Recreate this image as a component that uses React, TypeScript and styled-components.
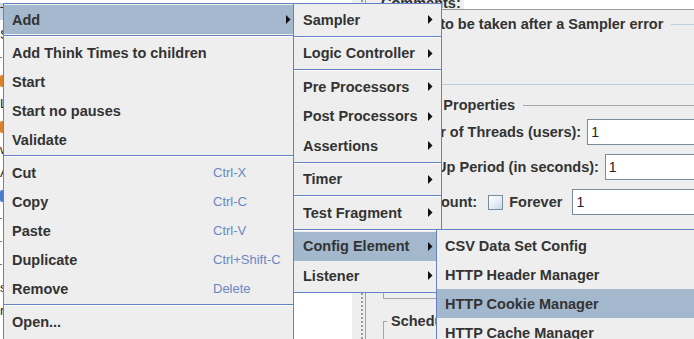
import { FC } from "react"
import styled, { createGlobalStyle } from "styled-components"

const GlobalStyle = createGlobalStyle`
  html, body {
    margin: 0;
    padding: 0;
    overflow: hidden;
    background: #eeeeee;
  }
  body {
    font-family: "Liberation Sans", Arial, sans-serif;
  }
`

const Screen = styled.div`
  position: relative;
  display: flex;
  width: 694px;
  height: 339px;
  overflow: hidden;
  background: #eeeeee;
  color: #333333;
  font-family: "Liberation Sans", Arial, sans-serif;
`

/* ---------- tree on the left (mostly hidden by the popup) ---------- */

const Tree = styled.div`
  flex: none;
  width: 352px;
  background: #ffffff;
  display: flex;
  flex-direction: column;
`
const TreeRow = styled.div<{ $indent: number }>`
  height: 23px;
  flex: none;
  display: flex;
  align-items: center;
  gap: 4px;
  padding-left: ${({ $indent }) => $indent}px;
  font-size: 13px;
  color: #222222;
  white-space: nowrap;
`
const Connector = styled.span`
  width: 10px;
  border-top: 1px dotted #777777;
`
const TreeIcon = styled.span<{ $color: string }>`
  width: 12px;
  height: 12px;
  background: ${({ $color }) => $color};
  border-radius: 2px;
`
const TreeLabel = styled.span<{ $selected?: boolean }>`
  padding: 1px 3px 1px 0;
  background: ${({ $selected }) => ($selected ? "#c8d7ea" : "transparent")};
`

/* ---------- split pane divider ---------- */

const Divider = styled.div`
  flex: none;
  width: 14px;
  padding-left: 9px;
  box-sizing: border-box;
  display: flex;
  border-right: 1px solid #8ea3c8;
  &::before {
    content: "";
    width: 0;
    border-left: 2px dotted #9b9b9b;
  }
`

/* ---------- thread group panel ---------- */

const Panel = styled.div`
  flex: none;
  width: 420px;
  display: flex;
  flex-direction: column;
  padding-left: 15px;
  box-sizing: border-box;
`
const CommentsRow = styled.div`
  height: 9px;
  flex: none;
  display: flex;
  align-items: flex-end;
  gap: 3px;
  overflow: hidden;
  border-bottom: 1px solid #9a9a9a;
`
const Label = styled.span`
  font-weight: bold;
  font-size: 14.5px;
  line-height: 11px;
  white-space: nowrap;
  color: #333333;
`
const CommentsField = styled.div`
  flex: 1;
  height: 9px;
  background: #ffffff;
`
const Group = styled.fieldset<{ $tone: "blue" | "etched"; $gap: number; $pad: string }>`
  margin: ${({ $gap }) => $gap}px 0 0 2px;
  padding: ${({ $pad }) => $pad};
  min-width: 0;
  border: 1px solid ${({ $tone }) => ($tone === "blue" ? "#b8cfe5" : "#a6a6a6")};
  display: flex;
  flex-direction: column;
  gap: 9px;
`
const Title = styled.legend`
  margin-left: -2px;
  padding: 0 8px 0 4px;
  font-weight: bold;
  font-size: 14.5px;
  line-height: 16px;
  color: #333333;
  white-space: nowrap;
`
const Spacer = styled.div<{ $h: number }>`
  height: ${({ $h }) => $h}px;
`
const FormRow = styled.div`
  height: 26px;
  flex: none;
  display: flex;
  align-items: center;
  gap: 6px;
  padding-left: 2px;
`
const FormLabel = styled.span`
  font-weight: bold;
  font-size: 14.5px;
  white-space: nowrap;
  color: #333333;
`
const TextField = styled.div<{ $lead?: number }>`
  flex: 1;
  align-self: stretch;
  margin-left: ${({ $lead }) => $lead ?? 0}px;
  display: flex;
  align-items: center;
  padding-left: 3px;
  background: #ffffff;
  border: 1px solid #7c8b99;
  border-right: none;
  font-size: 14px;
  color: #222222;
`
const CheckBox = styled.span<{ $lead?: number }>`
  flex: none;
  width: 13px;
  height: 13px;
  margin-left: ${({ $lead }) => $lead ?? 0}px;
  border: 1px solid #7c8b99;
  background: linear-gradient(135deg, #ffffff 0%, #e5edf6 55%, #c9d8e8 100%);
`

/* ---------- popup menus ---------- */

const Popup = styled.div<{ $x: number; $y: number; $w: number }>`
  position: absolute;
  left: ${({ $x }) => $x}px;
  top: ${({ $y }) => $y}px;
  width: ${({ $w }) => $w}px;
  box-sizing: border-box;
  display: flex;
  flex-direction: column;
  padding: 1px 0;
  background: #eeeeee;
  border: 1px solid #6382bf;
  font-family: "Liberation Sans", Arial, sans-serif;
`
const Item = styled.div<{ $h: number; $indent: number; $active?: boolean }>`
  flex: none;
  height: ${({ $h }) => $h}px;
  display: flex;
  align-items: center;
  padding-left: ${({ $indent }) => $indent}px;
  background: ${({ $active }) => ($active ? "#a3b8cc" : "transparent")};
  font-weight: bold;
  font-size: 14.5px;
  color: #333333;
  white-space: nowrap;
`
const ItemText = styled.span`
  flex: 1;
`
const Shortcut = styled.span`
  flex: none;
  width: 80px;
  font-weight: normal;
  font-size: 13px;
  color: #6a87c4;
`
const ArrowBox = styled.span<{ $gap: number }>`
  flex: none;
  display: flex;
  margin-right: ${({ $gap }) => $gap}px;
`
const Separator = styled.div`
  flex: none;
  height: 0;
  margin: 1px 0;
  border-top: 1px solid #6382bf;
  border-bottom: 1px solid #ffffff;
`

const Arrow: FC = () => (
  <svg width="5" height="9" viewBox="0 0 5 9">
    <polygon points="0,0 4.5,4.5 0,9" fill="#111111" />
  </svg>
)

type Entry =
  | { label: string; shortcut?: string; submenu?: boolean; active?: boolean }
  | "sep"

const mainMenu: Entry[] = [
  { label: "Add", submenu: true, active: true },
  "sep",
  { label: "Add Think Times to children" },
  { label: "Start" },
  { label: "Start no pauses" },
  { label: "Validate" },
  "sep",
  { label: "Cut", shortcut: "Ctrl-X" },
  { label: "Copy", shortcut: "Ctrl-C" },
  { label: "Paste", shortcut: "Ctrl-V" },
  { label: "Duplicate", shortcut: "Ctrl+Shift-C" },
  { label: "Remove", shortcut: "Delete" },
  "sep",
  { label: "Open..." },
  { label: "Merge" },
]

const addMenu: Entry[] = [
  { label: "Sampler", submenu: true },
  "sep",
  { label: "Logic Controller", submenu: true },
  "sep",
  { label: "Pre Processors", submenu: true },
  { label: "Post Processors", submenu: true },
  { label: "Assertions", submenu: true },
  "sep",
  { label: "Timer", submenu: true },
  "sep",
  { label: "Test Fragment", submenu: true },
  "sep",
  { label: "Config Element", submenu: true, active: true },
  { label: "Listener", submenu: true },
]

const configMenu: Entry[] = [
  { label: "CSV Data Set Config" },
  { label: "HTTP Header Manager" },
  { label: "HTTP Cookie Manager", active: true },
  { label: "HTTP Cache Manager" },
  { label: "HTTP Request Defaults" },
]

const Menu: FC<{
  x: number
  y: number
  width: number
  rowHeight: number
  indent: number
  arrowGap: number
  entries: Entry[]
}> = ({ x, y, width, rowHeight, indent, arrowGap, entries }) => (
  <Popup $x={x} $y={y} $w={width}>
    {entries.map((e, i) =>
      e === "sep" ? (
        <Separator key={i} />
      ) : (
        <Item key={i} $h={rowHeight} $indent={indent} $active={e.active}>
          <ItemText>{e.label}</ItemText>
          {e.shortcut && <Shortcut>{e.shortcut}</Shortcut>}
          {e.submenu && (
            <ArrowBox $gap={arrowGap}>
              <Arrow />
            </ArrowBox>
          )}
        </Item>
      )
    )}
  </Popup>
)

const treeRows = [
  { label: "Thread Group", indent: 0, selected: true, icon: "" },
  { label: "Sampler result", indent: 0, icon: "" },
  { label: "Loop", indent: 0, icon: "", line: true },
  { label: "Header Manager", indent: 0, icon: "#d9822b" },
  { label: "Login", indent: 0, icon: "" },
  { label: "Think time", indent: 0, icon: "#d9822b" },
  { label: "wait", indent: 0, icon: "" },
  { label: "Assertion", indent: 0, icon: "" },
  { label: "Flow Control", indent: 0, icon: "#4d7cc9" },
  { label: "Request", indent: 0, icon: "", line: true },
  { label: "Request", indent: 0, icon: "", line: true },
  { label: "Request", indent: 0, icon: "", line: true },
  { label: "summary", indent: 0, icon: "" },
  { label: "results", indent: 0, icon: "" },
]

const App: FC = () => (
  <>
    <GlobalStyle />
    <Screen>
      <Tree>
        {treeRows.map((r, i) => (
          <TreeRow key={i} $indent={r.indent}>
            {r.line && <Connector />}
            {r.icon && <TreeIcon $color={r.icon} />}
            <TreeLabel $selected={r.selected}>{r.label}</TreeLabel>
          </TreeRow>
        ))}
      </Tree>
      <Divider />
      <Panel>
        <CommentsRow>
          <Label>Comments:</Label>
          <CommentsField />
        </CommentsRow>
        <Group $tone="blue" $gap={6} $pad="0 0 0 5px">
          <Title>Action to be taken after a Sampler error</Title>
          <Spacer $h={52} />
        </Group>
        <Group $tone="etched" $gap={12} $pad="6px 0 13px 5px">
          <Title>Thread Properties</Title>
          <FormRow>
            <FormLabel>Number of Threads (users):</FormLabel>
            <TextField>1</TextField>
          </FormRow>
          <FormRow>
            <FormLabel>Ramp-Up Period (in seconds):</FormLabel>
            <TextField>1</TextField>
          </FormRow>
          <FormRow>
            <FormLabel>Loop Count:</FormLabel>
            <CheckBox $lead={5} />
            <FormLabel>Forever</FormLabel>
            <TextField $lead={4}>1</TextField>
          </FormRow>
          <FormRow>
            <CheckBox />
            <FormLabel>Delay Thread creation until needed</FormLabel>
          </FormRow>
          <FormRow>
            <CheckBox />
            <FormLabel>Scheduler</FormLabel>
          </FormRow>
        </Group>
        <Group $tone="etched" $gap={14} $pad="6px 0 13px 5px">
          <Title>Scheduler Configuration</Title>
          <FormRow>
            <FormLabel>Duration (seconds)</FormLabel>
            <TextField />
          </FormRow>
        </Group>
      </Panel>

      <Menu x={3} y={3} width={291} rowHeight={29} indent={8} arrowGap={2} entries={mainMenu} />
      <Menu x={293} y={3} width={149} rowHeight={29.5} indent={9} arrowGap={8} entries={addMenu} />
      <Menu x={436} y={229} width={300} rowHeight={29} indent={8} arrowGap={8} entries={configMenu} />
    </Screen>
  </>
)

export default App
